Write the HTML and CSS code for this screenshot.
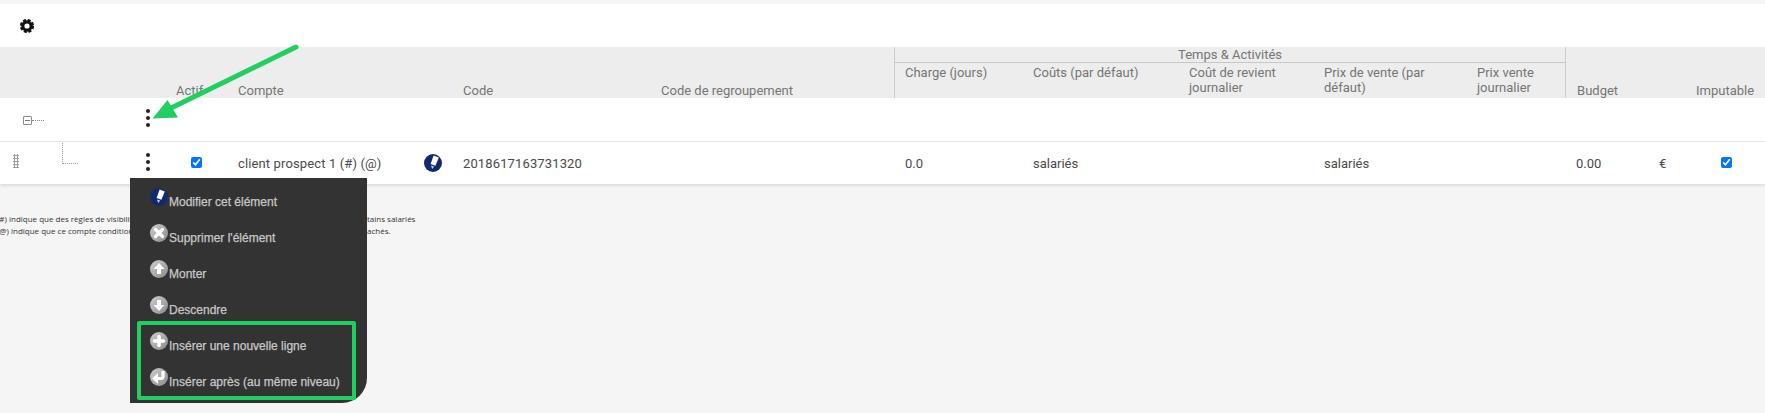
FILE: index.html
```html
<!DOCTYPE html>
<html lang="fr">
<head>
<meta charset="utf-8">
<title>Comptes</title>
<link rel="stylesheet" href="styles.css">
</head>
<body>
<svg width="0" height="0" class="defs">
  <defs>
    <linearGradient id="g" x1="0" y1="0" x2="1" y2="1"><stop offset="0" stop-color="#cfcfcf"/><stop offset="1" stop-color="#8a8a8a"/></linearGradient>
    <symbol id="kebab" viewBox="0 0 6 20"><circle cx="3" cy="3" r="2"/><circle cx="3" cy="10" r="2"/><circle cx="3" cy="17" r="2"/></symbol>
    <symbol id="pen" viewBox="0 0 18 18"><circle cx="9" cy="9" r="9" fill="#12296e"/><path d="M9.600 1.600l5.200 1.800-3.400 8.400-4.800-1.700z" fill="#fff"/><path d="M7 11.400l3.200 1.100-2 2.600z" fill="#c9d0e4"/></symbol>
  </defs>
</svg>

<div class="toolbar">
  <svg class="gear" viewBox="0 0 14 14"><circle cx="7" cy="7" r="4.200" fill="none" stroke="#111" stroke-width="3.200"/><circle cx="7" cy="7" r="6" fill="none" stroke="#111" stroke-width="2.200" stroke-dasharray="3 1.710"/></svg>
</div>

<table class="grid">
  <colgroup>
    <col class="c130"><col class="c36"><col class="c62"><col class="c225"><col class="c198"><col class="c243"><col class="c129"><col class="c156"><col class="c135"><col class="c153"><col class="c98"><col class="c84"><col class="c37"><col class="c79">
  </colgroup>
  <thead>
    <tr class="head-top">
      <th rowspan="2"></th>
      <th rowspan="2"></th>
      <th rowspan="2">Actif</th>
      <th rowspan="2">Compte</th>
      <th rowspan="2">Code</th>
      <th rowspan="2">Code de regroupement</th>
      <th colspan="5" class="group">Temps &amp; Activités</th>
      <th colspan="2" rowspan="2" class="budget">Budget</th>
      <th rowspan="2">Imputable</th>
    </tr>
    <tr class="head-sub">
      <th class="first">Charge (jours)</th>
      <th>Coûts (par défaut)</th>
      <th>Coût de revient journalier</th>
      <th>Prix de vente (par défaut)</th>
      <th>Prix vente journalier</th>
    </tr>
  </thead>
  <tbody>
    <tr class="root">
      <td><div class="root-tree"><span class="minus"></span><span class="dots-h"></span></div></td>
      <td><svg class="kebab"><use href="#kebab"/></svg></td>
      <td colspan="12"></td>
    </tr>
    <tr class="leaf">
      <td><div class="leaf-tree"><span class="handle"></span><span class="elbow"></span></div></td>
      <td><svg class="kebab"><use href="#kebab"/></svg></td>
      <td class="chk-actif"><input type="checkbox" checked></td>
      <td><div class="name"><span class="wide">client prospect 1 (#) (@)</span><svg class="pen-lg"><use href="#pen"/></svg></div></td>
      <td class="wide">2018617163731320</td>
      <td></td>
      <td class="charge-val">0.0</td>
      <td>salariés</td>
      <td></td>
      <td>salariés</td>
      <td></td>
      <td class="budget-val">0.00</td>
      <td>€</td>
      <td class="chk-imp"><input type="checkbox" checked></td>
    </tr>
  </tbody>
</table>

<div class="notes">
  <p><span>(#) indique que des règles de visibilit</span><span>tains salariés</span></p>
  <p><span>(@) indique que ce compte condition</span><span>achés.</span></p>
</div>

<div class="menu">
  <div class="item"><svg class="ico"><use href="#pen"/></svg><span>Modifier cet élément</span></div>
  <div class="item"><svg class="ico" viewBox="0 0 18 18"><circle cx="9" cy="9" r="9" fill="url(#g)"/><path d="M5.500 5.500l7 7M12.500 5.500l-7 7" stroke="#fff" stroke-width="3.200" stroke-linecap="round"/></svg><span>Supprimer l'élément</span></div>
  <div class="item"><svg class="ico" viewBox="0 0 18 18"><circle cx="9" cy="9" r="9" fill="url(#g)"/><path d="M9 3l5.500 6H11v5H7V9H3.500z" fill="#fff"/></svg><span>Monter</span></div>
  <div class="item"><svg class="ico" viewBox="0 0 18 18"><circle cx="9" cy="9" r="9" fill="url(#g)"/><path d="M9 15L3.500 9H7V4h4v5h3.500z" fill="#fff"/></svg><span>Descendre</span></div>
  <div class="item"><svg class="ico" viewBox="0 0 18 18"><circle cx="9" cy="9" r="9" fill="url(#g)"/><path d="M9 4.500v9M4.500 9h9" stroke="#fff" stroke-width="3.600" stroke-linecap="round"/></svg><span>Insérer une nouvelle ligne</span></div>
  <div class="item"><svg class="ico" viewBox="0 0 18 18"><circle cx="9" cy="9" r="9" fill="url(#g)"/><path d="M13 3v5.500a2 2 0 0 1-2 2H7" fill="none" stroke="#fff" stroke-width="3.200"/><path d="M8 5v11l-6-5.500z" fill="#fff"/></svg><span>Insérer après (au même niveau)</span></div>
  <div class="callout"></div>
</div>

<svg class="arrow" viewBox="0 0 320 130">
  <path d="M296 47L165 111" stroke="#21cf60" stroke-width="5" stroke-linecap="round" fill="none"/>
  <path d="M152.500 118.500L167.500 100 178 117.500z" fill="#21cf60"/>
</svg>
</body>
</html>
```
FILE: styles.css
```css
* { box-sizing: border-box; }
html, body { margin: 0; padding: 0; }
body {
  background: #f5f5f5;
  font-family: Roboto, "Liberation Sans", sans-serif;
  font-size: 13px;
  color: #444;
  height: 413px;
  overflow: hidden;
  position: relative;
  padding-top: 4px;
}
.defs { position: absolute; }

.toolbar {
  height: 43px;
  background: #fff;
  display: flex;
  align-items: center;
  padding-left: 20px;
}
.gear { width: 14px; height: 14px; display: block; }

.grid {
  width: 1765px;
  table-layout: fixed;
  border-collapse: separate;
  border-spacing: 0;
  background: #fff;
  box-shadow: 0 2px 3px rgba(0, 0, 0, .1);
}
.c130 { width: 130px; } .c36 { width: 36px; } .c62 { width: 62px; } .c225 { width: 225px; }
.c198 { width: 198px; } .c243 { width: 243px; } .c129 { width: 129px; } .c156 { width: 156px; }
.c135 { width: 135px; } .c153 { width: 153px; } .c98 { width: 98px; } .c84 { width: 84px; }
.c37 { width: 37px; } .c79 { width: 79px; }

th {
  background: #ededed;
  color: #757575;
  font-weight: 400;
  font-size: 13px;
  line-height: 15px;
  text-align: left;
  vertical-align: bottom;
  padding: 0 0 0 10px;
}
.head-top { height: 16px; }
.head-sub { height: 35px; }
.head-top .group {
  text-align: center;
  vertical-align: top;
  padding: 0;
  border-left: 1px solid #ccc;
  border-bottom: 1px solid #c8c8c8;
}
.head-sub th { vertical-align: top; padding-top: 2px; padding-right: 10px; }
.head-sub .first { border-left: 1px solid #ccc; padding-left: 10px; }
.head-top .budget { border-left: 1px solid #ccc; padding-left: 11px; }

td {
  padding: 0 0 0 10px;
  color: #4a4a4a;
  line-height: 15px;
  vertical-align: middle;
}
.root { height: 44px; }
.root td { border-bottom: 1px solid #e6e6e6; }
.leaf { height: 42px; }
td:first-child, td:nth-child(2) { padding: 0; }
.budget-val { padding-left: 11px; }
.charge-val { padding-left: 11px; }
.wide { letter-spacing: .13px; }

.kebab { display: block; width: 6px; height: 20px; margin: -3px 0 0 15px; fill: #222; }

.root-tree { display: flex; align-items: center; padding: 1px 0 0 23px; }
.minus {
  width: 9px;
  height: 9px;
  border: 1.500px solid #8c8c8c;
  border-radius: 1px;
  background: linear-gradient(#777, #777) center / 5px 1px no-repeat;
}
.dots-h { width: 12px; border-top: 1px dotted #888; }

.leaf-tree { display: flex; align-items: flex-start; height: 42px; padding-left: 13px; }
.handle {
  width: 6px;
  height: 14px;
  margin-top: 12px;
  background: radial-gradient(circle, #a0a0a0 0 1px, transparent 1.100px) 0 0 / 3px 3px;
}
.elbow {
  width: 16px;
  height: 21px;
  margin: 1px 0 0 43px;
  border-left: 1px dotted #999;
  border-bottom: 1px dotted #999;
}

input[type="checkbox"] { display: block; width: 11px; height: 11px; margin: 0; }
.chk-actif { padding-left: 25px; padding-bottom: 2px; }
.chk-imp { padding-left: 35px; padding-bottom: 2px; }

.name { display: flex; justify-content: space-between; align-items: center; padding-right: 11px; }
.pen-lg { width: 18px; height: 18px; display: block; }

.notes {
  padding-top: 29px;
  font-family: "Open Sans", "Liberation Sans", sans-serif;
  font-size: 8px;
  line-height: 12px;
  color: #333;
}
.notes p { margin: 0; display: grid; grid-template-columns: 367px auto; white-space: nowrap; }
.notes span:first-child { margin-left: -3px; }

.menu {
  position: absolute;
  left: 130px;
  top: 178px;
  width: 237px;
  height: 225px;
  padding: 10px 0 0 20px;
  background: #333;
  border-bottom-right-radius: 25px;
  font-family: "Liberation Sans", Arial, sans-serif;
  font-size: 12px;
  color: #c8c8c8;
}
.item { display: flex; height: 36px; align-items: flex-start; gap: 1px; }
.item span { margin-top: 7px; line-height: 14px; -webkit-text-stroke: .25px #c8c8c8; }
.ico { width: 18px; height: 18px; display: block; flex: none; }
.callout {
  position: absolute;
  left: 7px;
  top: 143px;
  width: 219px;
  height: 79px;
  border: 4px solid #21cf60;
  border-radius: 2px;
}

.arrow {
  position: absolute;
  left: 0;
  top: 0;
  width: 320px;
  height: 130px;
  pointer-events: none;
}
```
